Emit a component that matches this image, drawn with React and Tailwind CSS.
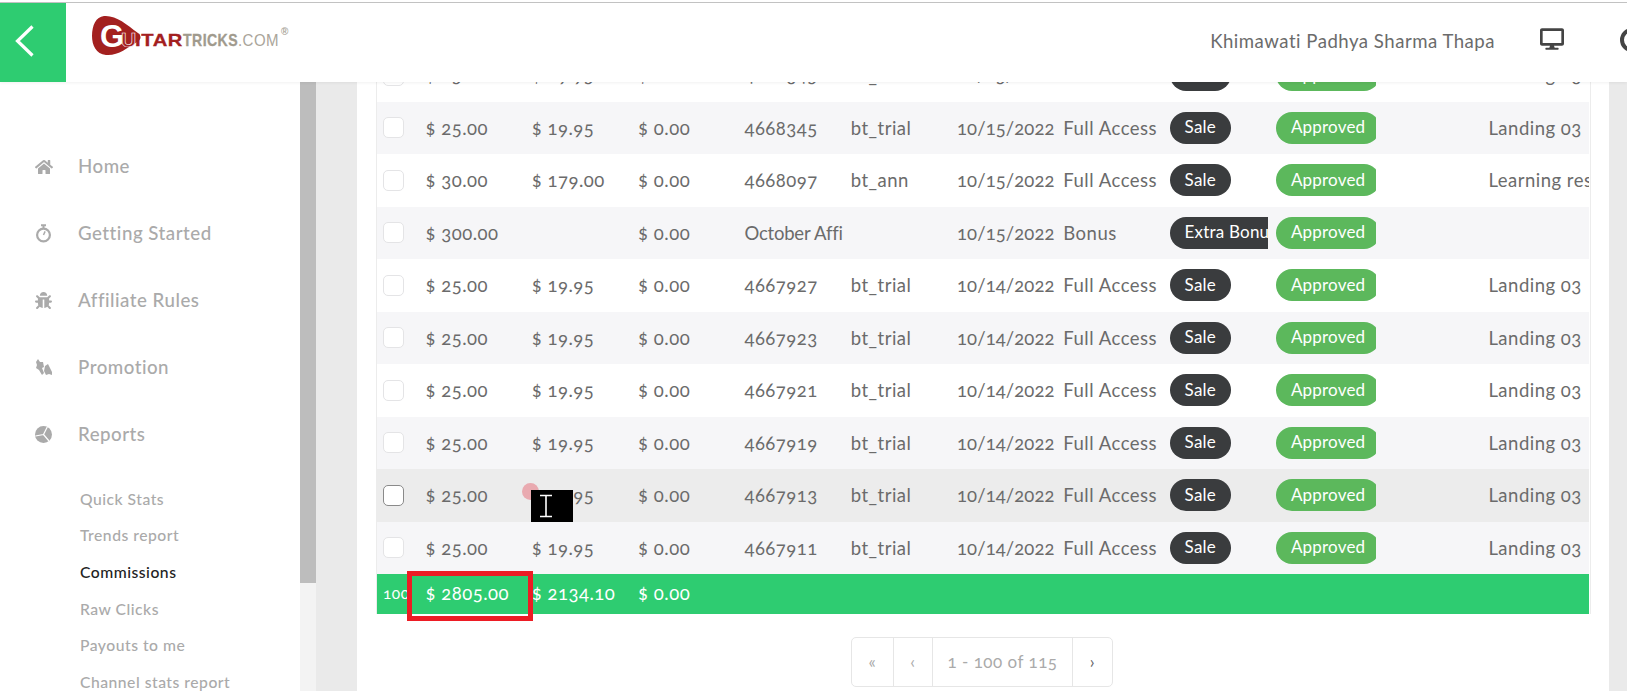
import { FaHome, FaBug, FaDesktop } from "react-icons/fa";

const menu = [
  { label: "Home", icon: <FaHome size={18} /> },
  { label: "Getting Started", icon: <Stopwatch /> },
  { label: "Affiliate Rules", icon: <FaBug size={17} /> },
  { label: "Promotion", icon: <Horn /> },
  { label: "Reports", icon: <Pie /> },
];

const submenu = ["Quick Stats", "Trends report", "Commissions", "Raw Clicks", "Payouts to me", "Channel stats report"];

const trial = (id, date) => ({ amount: "$ 25.00", price: "$ 19.95", id, plan: "bt_trial", date, product: "Full Access", type: "Sale", page: "Landing 03" });

const rows = [
  { ...trial("4668345", "10/15/2022") },
  { ...trial("4668345", "10/15/2022"), striped: true },
  { ...trial("4668097", "10/15/2022"), amount: "$ 30.00", price: "$ 179.00", plan: "bt_ann", page: "Learning resources" },
  { amount: "$ 300.00", price: "", id: <span className="tracking-[-0.2px]">October Affiliate</span>, plan: "", date: "10/15/2022", product: "Bonus", type: "Extra Bonus", page: "", striped: true },
  { ...trial("4667927", "10/14/2022") },
  { ...trial("4667923", "10/14/2022"), striped: true },
  { ...trial("4667921", "10/14/2022") },
  { ...trial("4667919", "10/14/2022"), striped: true },
  { ...trial("4667913", "10/14/2022"), hover: true, cursor: true },
  { ...trial("4667911", "10/14/2022"), striped: true },
];

function Stopwatch() {
  return (
    <svg width="17" height="19" viewBox="0 0 17 19" fill="none" stroke="currentColor">
      <circle cx="8.5" cy="11" r="6.4" strokeWidth="2.2" />
      <path d="M6 1.2h5M8.5 1.5v3" strokeWidth="2" />
      <path d="M8.5 11l1.6-3.6" strokeWidth="1.5" />
    </svg>
  );
}

function Horn() {
  return (
    <svg width="18" height="18" viewBox="0 0 18 18" fill="currentColor">
      <path d="M3 0L5 3L8 3L9 8L7 9L9 14L7 16L4 11L1 9L2 6L1 3Z" />
      <path d="M10 7L13 5L17 13L17 16L14 15L11 16L9 12Z" />
    </svg>
  );
}

function Pie() {
  return (
    <svg width="17" height="17" viewBox="0 0 17 17">
      <circle cx="8.5" cy="8.5" r="8.5" fill="currentColor" />
      <path d="M8.5 8.5L12.5 0.5M8.5 8.5L0.5 10M8.5 8.5L14 15" stroke="#fff" strokeWidth="1.2" fill="none" />
    </svg>
  );
}

function Logo() {
  return (
    <svg width="200" height="44" viewBox="0 0 200 44" className="shrink-0">
      <path d="M12 1C24 0 34 9 46 18C50 21 49 25 45 27C35 33 26 41 14 40C4 39 0 30 0 21C0 10 4 2 12 1Z" fill="#a3201f" />
      <text x="8" y="32" fontFamily="Liberation Sans, sans-serif" fontWeight="700" fontSize="31" fill="#fff">G</text>
      <text x="29" y="32" fontFamily="Liberation Sans, sans-serif" fontWeight="700" fontSize="21" fill="#a3201f" stroke="#fff" strokeWidth="0.6">U</text>
      <text x="43" y="31" fontFamily="Liberation Sans, sans-serif" fontWeight="700" fontSize="17" fill="#a3201f" stroke="#a3201f" strokeWidth="0.3" textLength="48" lengthAdjust="spacingAndGlyphs">ITAR</text>
      <text x="91" y="31" fontFamily="Liberation Sans, sans-serif" fontWeight="700" fontSize="17" fill="#a09a8d" stroke="#a09a8d" strokeWidth="0.3" textLength="55" lengthAdjust="spacingAndGlyphs">TRICKS</text>
      <text x="146" y="31" fontFamily="Liberation Sans, sans-serif" fontSize="17" fill="#aaa59a" textLength="41" lengthAdjust="spacingAndGlyphs">.COM</text>
      <text x="189" y="20" fontFamily="Liberation Sans, sans-serif" fontSize="10" fontWeight="700" fill="#aaa59a">®</text>
    </svg>
  );
}

function Pill({ children, green }) {
  return (
    <span className={`inline-flex h-8 items-center whitespace-nowrap rounded-2xl px-[15px] pb-[2px] text-[17px] tracking-[0.2px] text-white ${green ? "bg-[#5cb85c]" : "bg-[#3a3c3e]"}`}>
      {children}
    </span>
  );
}

const Cell = ({ children, className = "w-[106.3px] pt-[2px]" }) => (
  <div className={`shrink-0 pr-2 ${className}`}>
    <div className="overflow-hidden whitespace-nowrap">{children}</div>
  </div>
);

function Row({ row }) {
  const bg = row.hover ? "bg-[#ececec]" : row.striped ? "bg-[#f6f6f8]" : "bg-white";
  return (
    <div className="relative h-[52.5px]">
      <div className={`flex h-full items-center overflow-hidden ${bg}`}>
        <div className="w-[48.5px] shrink-0 pl-[6px]">
          <div className={`h-[21px] w-[21px] rounded-[5px] border bg-white ${row.hover ? "border-[#8a8a8a]" : "border-[#e4e4e6]"}`} />
        </div>
        <Cell>{row.amount}</Cell>
        <Cell>{row.price}</Cell>
        <Cell>$ 0.00</Cell>
        <Cell>{row.id}</Cell>
        <Cell>{row.plan}</Cell>
        <Cell className="w-[106.3px] pt-[2px] tracking-[0.1px]">{row.date}</Cell>
        <Cell>{row.product}</Cell>
        <Cell className="w-[106.3px]"><Pill>{row.type}</Pill></Cell>
        <div className="w-[212.5px] shrink-0">
          <div className="w-[100px] overflow-hidden"><Pill green>Approved</Pill></div>
        </div>
        <div className="whitespace-nowrap pt-[2px]">{row.page}</div>
      </div>
      {row.cursor && (
        <>
          <div className="absolute left-[145px] top-[14px] h-[17px] w-[17px] rounded-full bg-[#e9aab0]" />
          <div className="absolute left-[154px] top-[21px] flex h-[42px] w-[42px] items-start justify-start bg-black pl-[8px] pt-[4px]">
            <svg width="14" height="24" viewBox="0 0 14 24" fill="none" stroke="#fff" strokeWidth="1.6">
              <path d="M1 1.5h12M7 1.5v21M1 22.5h12" />
            </svg>
          </div>
        </>
      )}
    </div>
  );
}

function Pagination() {
  return (
    <div className="ml-[475px] mt-[23px] flex h-[50px] w-[262px] items-center rounded-[5px] border border-[#e6e6e6] text-[17px] text-[#aaa]">
      <div className="flex h-full w-[42px] items-center justify-center border-r border-[#e6e6e6]">«</div>
      <div className="flex h-full w-[39px] items-center justify-center border-r border-[#e6e6e6]">‹</div>
      <div className="flex h-full w-[140px] items-center justify-center border-r border-[#e6e6e6]">1 - 100 of 115</div>
      <div className="flex h-full flex-1 items-center justify-center text-[#666]">›</div>
    </div>
  );
}

export default function App() {
  return (
    <div className="flex h-[691px] flex-col overflow-hidden bg-white font-['Lato',sans-serif] oldstyle-nums tracking-[0.5px]">
      <div className="h-[3px] shrink-0 border-b border-[#c4c4c4]" />

      <header className="relative z-10 flex h-[79px] shrink-0 items-center bg-white shadow-[0_1px_3px_rgba(0,0,0,0.06)]">
        <div className="flex h-full w-[66px] items-center justify-start bg-[#2ecc71] pl-[15px]">
          <svg width="19" height="32" viewBox="0 0 19 32" fill="none" stroke="#fff" strokeWidth="3.2" className="-mt-[3px]">
            <path d="M17.5 1.5L2.5 16l15 14.5" />
          </svg>
        </div>
        <div className="ml-[26px] -mt-[12px]"><Logo /></div>
        <div className="ml-auto flex items-center">
          <span className="mr-[45px] -mt-[2px] text-[18.6px] text-[#6b6b6b]">Khimawati Padhya Sharma Thapa</span>
          <FaDesktop size={24} className="-mt-[6px] text-[#444]" />
          <div className="-mr-[17px] -mt-[4px] ml-[56px] h-[24px] w-[24px] rounded-full border-[4px] border-[#444]" />
        </div>
      </header>

      <div className="flex min-h-0 flex-1">
        <aside className="w-[300px] shrink-0 overflow-hidden pt-[51px]">
          {menu.map((item) => (
            <div key={item.label} className="flex h-[67px] items-center pl-[35px] text-[18.7px] font-medium text-[#aaa]">
              <div className="flex w-[43px] justify-start">{item.icon}</div>
              {item.label}
            </div>
          ))}
          <div className="mt-[13px] pl-[80px]">
            {submenu.map((item) => (
              <div key={item} className={`flex h-[36.7px] items-center text-[15.7px] font-medium ${item === "Commissions" ? "text-[#222]" : "text-[#aaa]"}`}>
                {item}
              </div>
            ))}
          </div>
        </aside>

        <div className="w-4 shrink-0 bg-[#f3f3f3]">
          <div className="h-[501px] bg-[#bdbdbd]" />
        </div>

        <main className="flex min-w-0 flex-1 bg-[#eaeaea] pl-[41px] pr-[18px]">
          <div className="min-w-0 flex-1 overflow-hidden bg-white pl-[19px] pr-[18px]">
            <div className="-mt-[33px] border-x border-[#ececec] pr-px text-[18.5px] text-[#6b6b6b]">
              {rows.map((row, i) => <Row key={i} row={row} />)}
              <div className="relative flex h-[40px] items-center bg-[#2ecc71] text-white">
                <div className="w-[48.5px] shrink-0 overflow-hidden pl-[6px] text-[15.5px]">100</div>
                <Cell className="w-[106.3px]">$ 2805.00</Cell>
                <Cell className="w-[106.3px]">$ 2134.10</Cell>
                <Cell className="w-[106.3px]">$ 0.00</Cell>
                <div className="absolute left-[30px] top-[-3px] h-[50px] w-[126px] border-[5px] border-[#ed1c24]" />
              </div>
            </div>
            <Pagination />
          </div>
        </main>
      </div>
    </div>
  );
}
